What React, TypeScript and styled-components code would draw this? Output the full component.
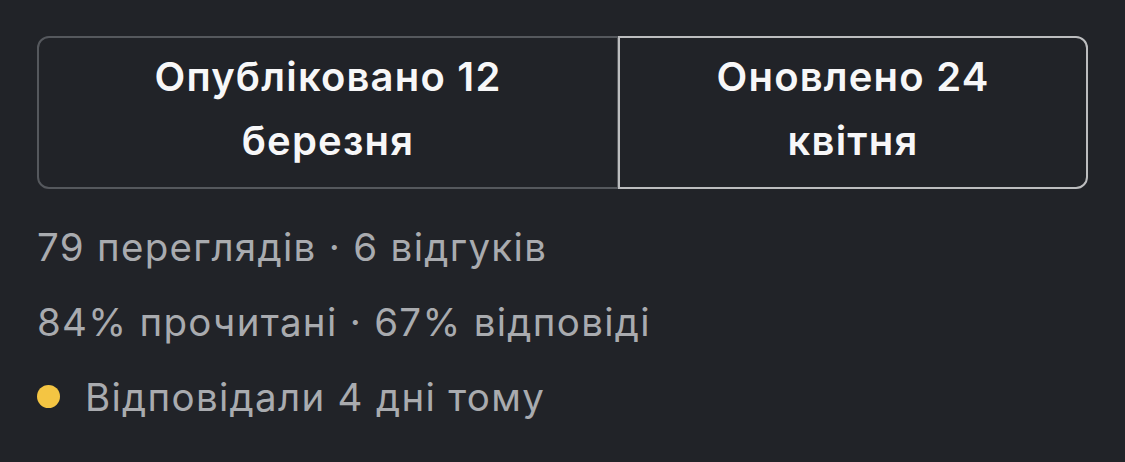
import styled, { createGlobalStyle } from 'styled-components'

const GlobalStyle = createGlobalStyle`
  html, body {
    margin: 0;
    padding: 0;
    background: #212328;
  }
  body {
    font-family: Inter, "Noto Sans", sans-serif;
    -webkit-font-smoothing: antialiased;
  }
`

const Page = styled.div`
  width: 1125px;
  height: 462px;
  box-sizing: border-box;
  padding: 36px 37px 0;
  background: #212328;
`

const Segments = styled.div`
  display: flex;
  height: 153px;
`

const Segment = styled.div<{ $active?: boolean; $grow: number; $side: 'left' | 'right' }>`
  flex: ${p => p.$grow} 1 0;
  display: flex;
  align-items: center;
  justify-content: center;
  box-sizing: border-box;
  border: 2px solid ${p => (p.$active ? '#bcbdbf' : '#55585d')};
  border-radius: ${p => (p.$side === 'left' ? '12px 0 0 12px' : '0 12px 12px 0')};
  ${p => (p.$side === 'right' ? 'margin-left: -1px;' : '')}
  color: #f7f7f8;
  font-size: 40px;
  font-weight: 600;
  line-height: 64px;
  text-align: center;
  letter-spacing: 1.2px;
  padding-bottom: 7px;
`

const Stats = styled.div`
  display: flex;
  flex-direction: column;
  padding-top: 20px;
`

const StatLine = styled.div`
  display: flex;
  align-items: center;
  gap: 25px;
  height: 75px;
  color: #a9abaf;
  font-size: 38.5px;
  font-weight: 400;
  letter-spacing: 1.3px;
`

const Dot = styled.span`
  width: 23px;
  height: 23px;
  border-radius: 50%;
  background: #f4c543;
  flex: none;
`

export default function App() {
  return (
    <Page>
      <GlobalStyle />
      <Segments>
        <Segment $side="left" $grow={583}>
          Опубліковано 12
          <br />
          березня
        </Segment>
        <Segment $side="right" $grow={470} $active>
          Оновлено 24
          <br />
          квітня
        </Segment>
      </Segments>
      <Stats>
        <StatLine>79 переглядів · 6 відгуків</StatLine>
        <StatLine>84% прочитані · 67% відповіді</StatLine>
        <StatLine>
          <Dot />
          Відповідали 4 дні тому
        </StatLine>
      </Stats>
    </Page>
  )
}
